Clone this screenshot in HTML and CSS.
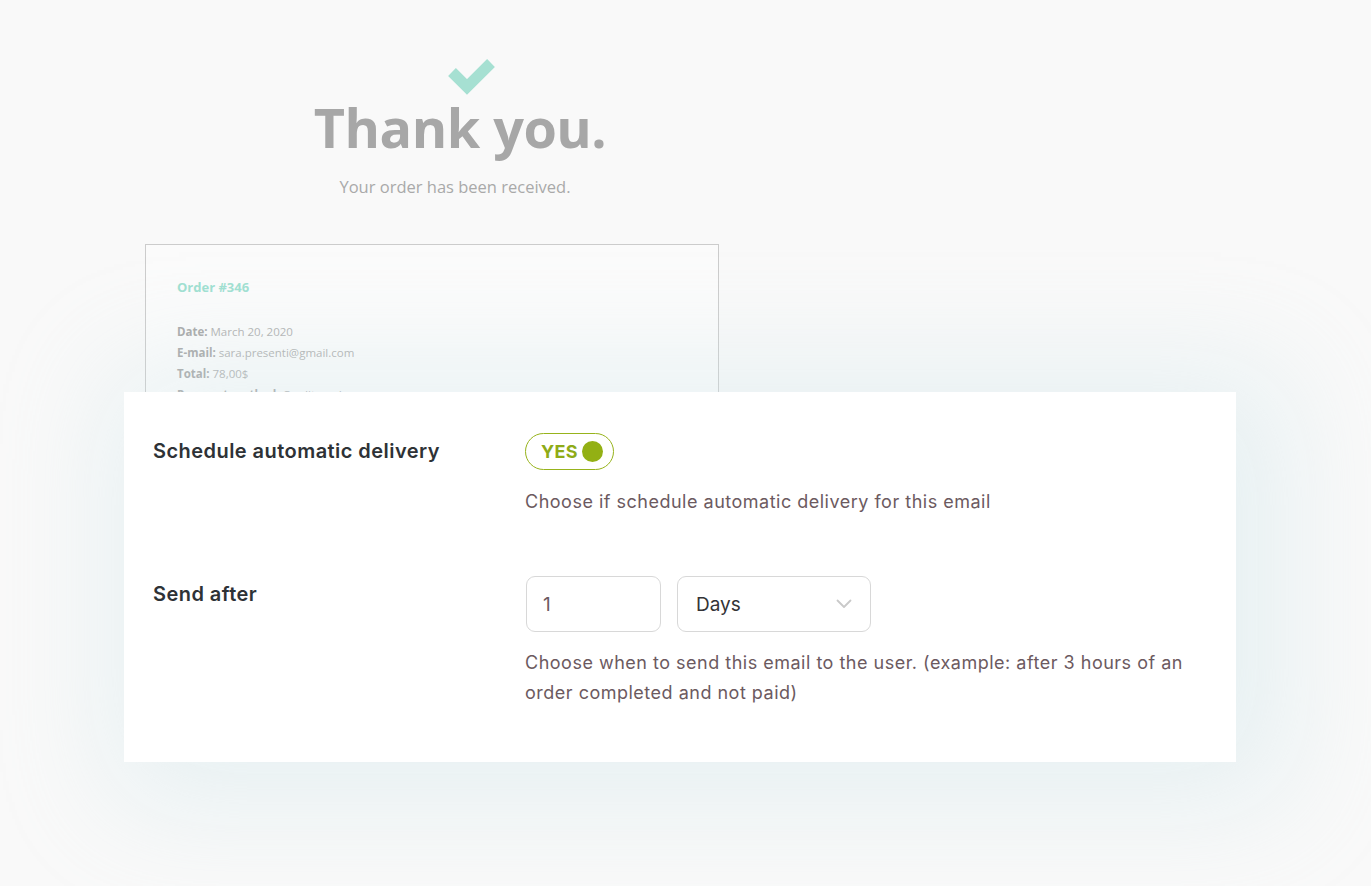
FILE: index.html
```html
<!DOCTYPE html>
<html lang="en">
<head>
<meta charset="utf-8">
<title>Schedule automatic delivery</title>
<link rel="stylesheet" href="styles.css">
</head>
<body>
<div class="page">
  <header class="hero">
    <svg class="check" width="48" height="40" viewBox="0 0 48 40" aria-hidden="true">
      <polyline points="4,14 19,29 43,5" fill="none" stroke="#a6e0d2" stroke-width="11" stroke-linecap="butt" stroke-linejoin="miter"/>
    </svg>
    <h1 class="hero-title">Thank you.</h1>
    <p class="hero-sub">Your order has been received.</p>
  </header>

  <div class="preview">
    <div class="order-card">
      <h2 class="order-title">Order #346</h2>
      <ul class="order-lines">
        <li><b>Date:</b> March 20, 2020</li>
        <li><b>E-mail:</b> sara.presenti@gmail.com</li>
        <li><b>Total:</b> 78,00$</li>
        <li><b>Payment method:</b> Credit card</li>
      </ul>
    </div>
  </div>

  <section class="panel">
    <div class="label">Schedule automatic delivery</div>
    <div class="field">
      <div class="toggle"><span class="toggle-text">YES</span><span class="toggle-dot"></span></div>
      <p class="desc desc-first">Choose if schedule automatic delivery for this email</p>
    </div>

    <div class="label">Send after</div>
    <div class="field">
      <div class="inputs">
        <div class="num-input">1</div>
        <div class="select">
          <span>Days</span>
          <svg class="chevron" width="16" height="10" viewBox="0 0 16 10" aria-hidden="true">
            <polyline points="1.5,1.5 8,8 14.5,1.5" fill="none" stroke="#c9c9c9" stroke-width="1.8" stroke-linecap="round" stroke-linejoin="round"/>
          </svg>
        </div>
      </div>
      <p class="desc desc-second">Choose when to send this email to the user. (example: after 3 hours of an order completed and not paid)</p>
    </div>
  </section>
</div>
</body>
</html>
```

FILE: styles.css
```css
html, body {
  margin: 0;
  padding: 0;
}

body {
  background: #f9f9f9;
  font-family: Inter, "Noto Sans", "Liberation Sans", sans-serif;
  overflow: hidden;
}

.page {
  padding-top: 58px;
  min-height: 886px;
  box-sizing: border-box;
}

.hero {
  width: 920px;
  text-align: center;
}

.check {
  display: block;
  margin: 0 auto;
  position: relative;
  left: 12px;
}

.hero-title {
  margin: 0;
  margin-top: -3px;
  font-family: "Open Sans", "Liberation Sans", sans-serif;
  font-weight: 700;
  font-size: 54px;
  line-height: 64px;
  color: #a7a7a7;
  letter-spacing: -0.5px;
}

.hero-sub {
  margin: 18px 0 0;
  font-family: "Open Sans", "Liberation Sans", sans-serif;
  font-size: 16.5px;
  line-height: 20px;
  color: #a9a9a9;
  position: relative;
  left: -5px;
}

.preview {
  margin-top: 47px;
  margin-left: 145px;
  width: 574px;
  height: 148px;
  overflow: hidden;
}

.order-card {
  box-sizing: border-box;
  height: 200px;
  border: 1px solid #cccccc;
  background: #fbfbfb;
  padding: 33px 31px 0;
  font-family: "Open Sans", "Liberation Sans", sans-serif;
}

.order-title {
  margin: 0;
  font-size: 13px;
  line-height: 18px;
  font-weight: 700;
  color: #9fe0d1;
}

.order-lines {
  list-style: none;
  margin: 25px 0 0;
  padding: 0;
  font-size: 11.5px;
  line-height: 21px;
  color: #b2b2b2;
}

.order-lines b {
  color: #a8a8a8;
  font-weight: 700;
}

.panel {
  position: relative;
  margin-left: 124px;
  width: 1112px;
  box-sizing: border-box;
  background: #ffffff;
  padding: 41px 30px 54px 29px;
  display: grid;
  grid-template-columns: 372px 1fr;
  row-gap: 59px;
  box-shadow: 20px 10px 110px 30px rgba(204, 228, 234, 0.42);
}

.label {
  font-size: 20px;
  line-height: 37px;
  font-weight: 600;
  color: #2e3236;
  letter-spacing: 0.45px;
}

.field {
  display: flex;
  flex-direction: column;
  align-items: flex-start;
}

.toggle {
  box-sizing: border-box;
  height: 37px;
  width: 89px;
  border: 1.5px solid #97b31b;
  border-radius: 19px;
  display: flex;
  align-items: center;
  padding-left: 15px;
  gap: 4px;
}

.toggle-text {
  font-size: 18px;
  font-weight: 700;
  color: #8eab17;
  letter-spacing: 0.3px;
}

.toggle-dot {
  width: 21px;
  height: 21px;
  border-radius: 50%;
  background: #93b014;
}

.desc {
  margin: 0;
  font-size: 18px;
  line-height: 30px;
  color: #6c5a5f;
  letter-spacing: 0.5px;
}

.desc-first {
  margin-top: 17px;
}

.desc-second {
  margin-top: 16px;
  max-width: 680px;
}

.inputs {
  display: flex;
  gap: 16px;
  padding-left: 1px;
}

.num-input, .select {
  box-sizing: border-box;
  height: 56px;
  border: 1.5px solid #d8d8d8;
  border-radius: 9px;
  display: flex;
  align-items: center;
  font-size: 19px;
}

.num-input {
  width: 135px;
  padding-left: 16px;
  color: #6c5a5f;
}

.select {
  width: 194px;
  padding: 0 18px 0 18px;
  justify-content: space-between;
  color: #333336;
}

.chevron {
  display: block;
}
```
